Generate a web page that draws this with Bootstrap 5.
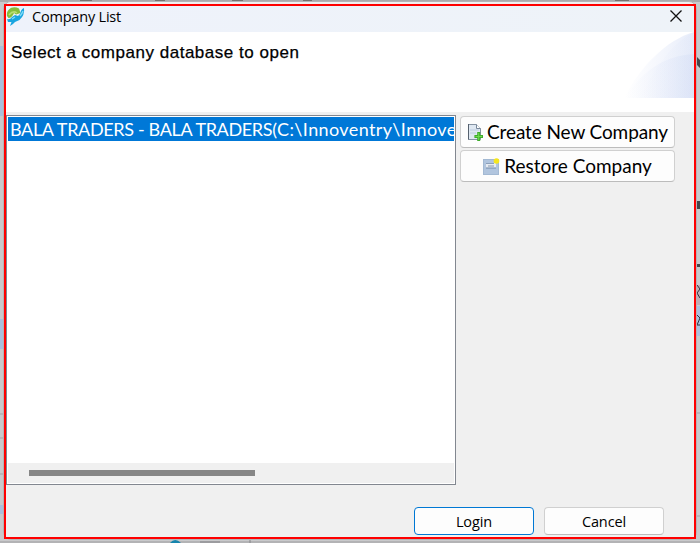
<!DOCTYPE html>
<html lang="en">
<head>
<meta charset="utf-8">
<title>Company List</title>
<link href="https://cdn.jsdelivr.net/npm/bootstrap@5.3.0/dist/css/bootstrap.min.css" rel="stylesheet">
<style>
body{width:700px;height:543px;background:#c9c9cb;font-family:"Open Sans","Noto Sans",sans-serif;color:#000}
.backdrop{left:0;top:0}
.window{margin:1px 3px 3px;height:539px;border-radius:8px;background:#f0f0f0;border:1px solid #b4b4b6}
.frame{margin:2px 0 0;height:535px;border:2px solid #f00;background:#f0f0f0}
.titlebar{height:26px;background:linear-gradient(90deg,#eef2fb,#eef3f8);}
.titlebar .caption{font-size:14.5px;letter-spacing:-.2px;line-height:22px;margin-left:7px}
.banner{height:80px;background:#fff}
.banner h1{font:17px/20px "Liberation Sans",Arial,sans-serif;letter-spacing:.52px;padding:11px 0 0 5px;white-space:nowrap;-webkit-text-stroke:.25px #000}
.content-area{padding-top:3px}
.list{width:450px;height:370px;border:1px solid #828790;background:#fff;padding:1px}
.entry{height:24px;line-height:25px;background:#0078d7;color:#fff;padding-left:2px;font-family:Lato,sans-serif;font-size:18px;white-space:nowrap}
.entry .company{letter-spacing:-.34px}
.entry .location{letter-spacing:.38px}
.track{height:20px;background:#f0f0f0;padding:7px 0 0 21px}
.thumb{width:226px;height:6px;background:#868686}
.actions{width:215px;margin-left:4px;gap:2px;padding-top:1px}
.wbtn{background:#fdfdfd;border:1px solid #d0d0d0;border-bottom-color:#bcbcbc;border-radius:4px;padding:0;color:#000}
.big{height:32px;font-family:Lato,sans-serif;font-size:19px;line-height:30px;white-space:nowrap}
.big .tight{letter-spacing:-.11px}
.small-btn{width:120px;height:28px;font-size:14.5px;line-height:27px;letter-spacing:-.1px}
.small-btn.main{border-color:#0078d4}
.foot{gap:10px;padding:22px 30px 0 0}
</style>
<script src="https://cdn.jsdelivr.net/npm/bootstrap@5.3.0/dist/js/bootstrap.bundle.min.js"></script>
</head>
<body class="overflow-hidden position-relative">
<svg class="backdrop position-absolute" width="700" height="543" aria-hidden="true">
  <path d="M0 0H700V2H0z" fill="#aaaaac"/><path d="M80 0h12v2H80zM155 0h10v2h-10zM232 0h11v2h-11zM303 0h9v2h-9zM615 0h14v2h-14z" fill="#74716e"/>
  <path d="M0 46h3v70H0zM0 319h3v30H0zM0 505h3v9H0z" fill="#a9bfdd"/>
  <path d="M0 414h3M0 438h3M0 474h3M697 516h3M697 413h3" stroke="#a3a3a7"/>
  <path d="M0 541H700V543H0z" fill="#b3b3b5"/><path d="M170 543q5-6 11 0z" fill="#1685ad"/><path d="M200 542h20M250 540v3" stroke="#858589"/>
  <path d="M697 57l3 3v8l-3-3zM697 201h3v8h-3zM697 264h3v3h-3z" fill="#45474a"/>
  <path d="M697 285h3v20h-3z" fill="#c0abb3"/><path d="M697 306h3v30h-3z" fill="#adbfdd"/>
  <path d="M697 285l3 4-3 4 3 5M697 315l3 3-3 7h3" stroke="#30343d" fill="none"/>
</svg>
<div class="window position-relative">
 <main class="frame d-flex flex-column">
  <header class="titlebar d-flex">
   <svg width="19" height="20" viewBox="0 0 19 20"><path d="M1 10C0 4 6-1 13 2.500L14.500 7 10 8.500 8 7Q6 12 2.500 12z" fill="#85bd3c"/><path d="M3 9Q7 4 11 7" fill="none" stroke="#b9dc72" stroke-width="1.500"/><path d="M1 13Q4 14 6 11L9 9 12 10 14 8Q15 3 18 2 19 9 13.500 14L9 16 7 18 4 20 5.500 16 2 16z" fill="#19a5e0"/><path d="M6 13l3-2M14 10Q16 8 17 5" fill="none" stroke="#7edcf7" stroke-width="1.4"/></svg>
   <span class="caption">Company List</span>
   <svg class="ms-auto" width="26" height="22" viewBox="0 0 26 22"><path d="M2.500 4.500l11 11M13.500 4.500l-11 11" stroke="#111" stroke-width="1.300"/></svg>
  </header>
  <section class="banner d-flex justify-content-between">
   <h1 class="m-0">Select a company database to open</h1>
   <svg width="72" height="66" viewBox="0 0 72 66"><defs><linearGradient id="g"><stop stop-color="#dfe6f8" stop-opacity="0"/><stop offset="1" stop-color="#ced9f4" stop-opacity=".5"/></linearGradient></defs><path d="M2 66C18 35 44 8 72 0V66z" fill="url(#g)"/><path d="M18 66C34 34 50 11 72 0V66z" fill="url(#g)" opacity=".3"/><path d="M2 66C23 37 42 24 72 22V66z" fill="url(#g)" opacity=".7"/></svg>
  </section>
  <section class="content-area d-flex">
   <div class="list d-flex flex-column">
    <div class="entry overflow-hidden"><span class="company">BALA TRADERS - BALA TRADERS</span><span class="location">(C:\Innoventry\Innove</span></div>
    <div class="track mt-auto"><div class="thumb"></div></div>
   </div>
   <div class="actions d-flex flex-column">
    <button class="wbtn big d-flex align-items-center justify-content-center"><svg class="me-1" width="16" height="18" viewBox="0 0 16 18"><path d="M1.500 1.500h8l4 4v11h-12z" fill="#dfe8f2" stroke="#8593a3"/><path d="M1.500 1v15.500" stroke="#56616e"/><path d="M9.500 1.500v4h4" fill="#fff" stroke="#76879a"/><path d="M3 7h9M3 10h6" stroke="#bdcce0"/><path d="M10.200 9h3v3H16v3h-2.800v3h-3v-3H7.400v-3h2.800z" fill="#3fac2c"/><path d="M11.700 10v7M8.500 13.500h6.500" stroke="#6fdc50"/></svg><span class="tight">Create New Company</span></button>
    <button class="wbtn big d-flex align-items-center justify-content-center"><svg class="me-1" width="17" height="17" viewBox="0 0 17 17"><rect x=".5" y="1.500" width="15" height="15" fill="#b1c5de" stroke="#a3b9d3"/><path d="M3 5h10v5H3z" fill="#e6ebf2"/><path d="M3 5.500h8" stroke="#8ca0ba"/><path d="M3 10h10" stroke="#7189a8"/><path d="M5 8h6" stroke="#8798ad"/><circle cx="13.500" cy="3" r="2.800" fill="#f5e61d"/></svg><span>Restore Company</span></button>
   </div>
  </section>
  <footer class="foot d-flex justify-content-end">
   <button class="wbtn small-btn main">Login</button>
   <button class="wbtn small-btn">Cancel</button>
  </footer>
 </main>
</div>
</body>
</html>
